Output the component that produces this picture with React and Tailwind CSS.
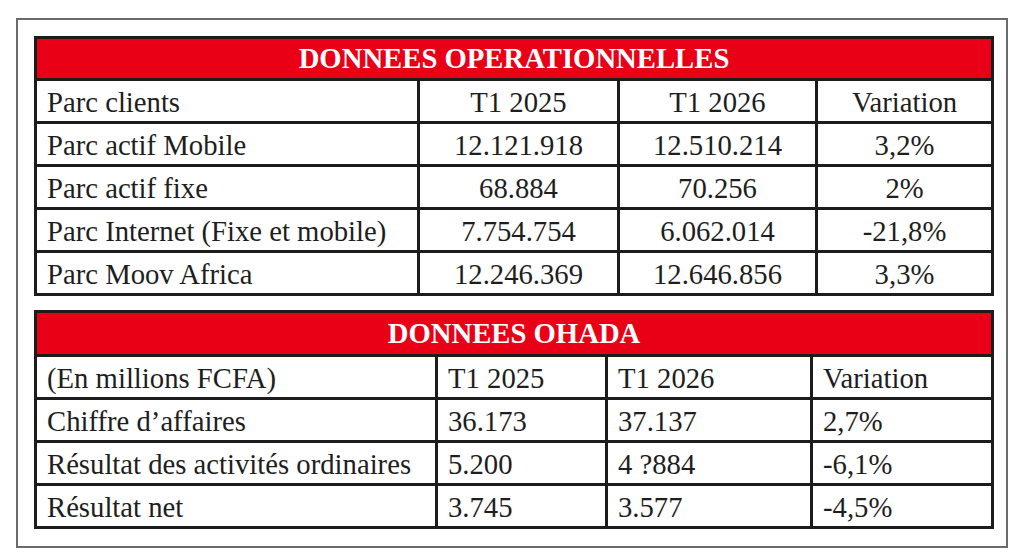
const operationnelles = [
  ['Parc clients', 'T1 2025', 'T1 2026', 'Variation'],
  ['Parc actif Mobile', '12.121.918', '12.510.214', '3,2%'],
  ['Parc actif fixe', '68.884', '70.256', '2%'],
  ['Parc Internet (Fixe et mobile)', '7.754.754', '6.062.014', '-21,8%'],
  ['Parc Moov Africa', '12.246.369', '12.646.856', '3,3%'],
];

const ohada = [
  ['(En millions FCFA)', 'T1 2025', 'T1 2026', 'Variation'],
  ["Chiffre d’affaires", '36.173', '37.137', '2,7%'],
  ['Résultat des activités ordinaires', '5.200', '4 ?884', '-6,1%'],
  ['Résultat net', '3.745', '3.577', '-4,5%'],
];

function DataTable({ title, rows, widths, centered, headClass }) {
  return (
    <table className="w-full table-fixed border-separate border-spacing-0 border-[3px] border-[#1c1c1c]">
      <colgroup>
        {widths.map((w, i) => (
          <col key={i} style={{ width: w }} />
        ))}
      </colgroup>
      <tbody>
        <tr>
          <th
            colSpan={4}
            className={'p-0 bg-[#ea0016] text-white font-bold text-center align-middle ' + headClass}
          >
            {title}
          </th>
        </tr>
        {rows.map((row, r) => (
          <tr key={r}>
            {row.map((cell, c) => (
              <td
                key={c}
                className={
                  'h-[43px] p-0 pt-[2px] border-t-[3px] border-[#1c1c1c] align-middle whitespace-nowrap ' +
                  (c > 0 ? 'border-l-[3px] ' : '') +
                  (centered && c > 0 ? 'text-center' : 'pl-[10px] text-left')
                }
              >
                {cell}
              </td>
            ))}
          </tr>
        ))}
      </tbody>
    </table>
  );
}

export default function App() {
  return (
    <div
      className="w-[1024px] h-[558px] bg-white pt-[18px] pl-[16px] text-[#1e1e1e] text-[28.7px] leading-none"
      style={{ fontFamily: '"Liberation Serif", "Times New Roman", serif' }}
    >
      <div className="w-[992px] h-[530px] border-2 border-[#6b6b6b] pt-[16px] pl-[16px] pr-[12px] flex flex-col gap-[14px]">
        <DataTable
          title="DONNEES OPERATIONNELLES"
          rows={operationnelles}
          widths={['380px', '200px', '198px', '176px']}
          headClass="h-[39px]"
          centered
        />
        <DataTable
          title="DONNEES OHADA"
          rows={ohada}
          widths={['398px', '170px', '205px', '181px']}
          headClass="h-[41px]"
        />
      </div>
    </div>
  );
}
